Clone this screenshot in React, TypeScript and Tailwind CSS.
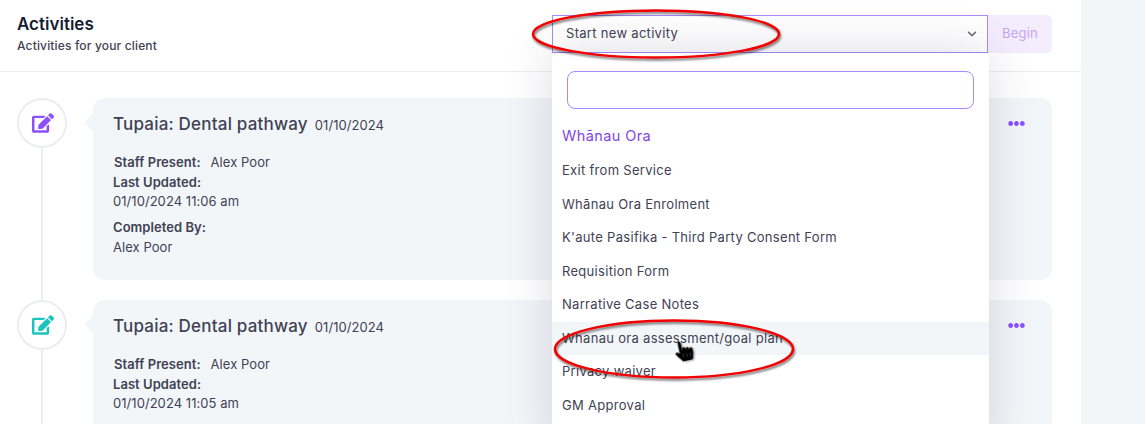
import { FaChevronDown, FaEdit, FaEllipsisH, FaHandPointer } from "react-icons/fa";

const font = "font-['Inter','Noto_Sans',sans-serif]";

const menuItems = [
  "Exit from Service",
  "Whānau Ora Enrolment",
  "K'aute Pasifika - Third Party Consent Form",
  "Requisition Form",
  "Narrative Case Notes",
  "Whanau ora assessment/goal plan",
  "Privacy waiver",
  "GM Approval",
];

interface ActivityProps {
  iconClass: string;
  updated: string;
  completed?: boolean;
}

function Activity({ iconClass, updated, completed }: ActivityProps) {
  return (
    <div className="relative flex pb-5">
      <div className="absolute top-0 bottom-0 left-[24px] w-[2px] bg-[#ebedf3]" />
      <div className="relative flex h-[50px] w-[50px] shrink-0 items-center justify-center rounded-full border-2 border-[#ebedf3] bg-white">
        <FaEdit className={`ml-[1px] text-[22px] ${iconClass}`} />
      </div>
      <div className="relative ml-[26px] h-[182px] flex-1 rounded-xl bg-[#f3f6f9] pt-[14px] pl-5 text-[13px] tracking-[0.05px] text-[#3f4254]">
        <div className="absolute top-[18px] -left-[6px] h-[13px] w-[13px] rotate-45 bg-[#f3f6f9]" />
        <div className="absolute top-[17px] right-[27px]">
          <FaEllipsisH className="text-[17px] text-[#8950fc]" />
        </div>
        <div className="flex items-baseline gap-[7px]">
          <span className="text-[17px] font-medium tracking-[0.2px]">Tupaia: Dental pathway</span>
          <span className="text-[13px]">01/10/2024</span>
        </div>
        <div className="mt-[15px] flex h-[20px] items-center pl-[1px]">
          <span className="font-semibold">Staff Present:</span>
          <span className="ml-[10px]">Alex Poor</span>
        </div>
        <div className="flex h-[20px] items-center font-semibold">Last Updated:</div>
        <div className="flex h-[19px] items-center">{updated}</div>
        {completed && (
          <>
            <div className="mt-[6px] flex h-[20px] items-center font-semibold">Completed By:</div>
            <div className="flex h-[20px] items-center">Alex Poor</div>
          </>
        )}
      </div>
    </div>
  );
}

export default function App() {
  return (
    <div className={`relative flex h-[424px] w-[1145px] overflow-hidden bg-[#f3f6f9] ${font}`}>
      <main className="relative h-full w-[1081px] bg-white">
        <header className="flex h-[72px] justify-between border-b border-[#ebedf3] pt-[15px] pr-[29px] pl-[17px]">
          <div className="-mt-[1px]">
            <h1 className="text-[17px] leading-[20px] font-semibold text-[#181c32]">Activities</h1>
            <p className="mt-[3px] text-[12px] leading-[18px] font-medium tracking-[0.16px] text-[#3f4254]">Activities for your client</p>
          </div>
          <div className="relative flex h-[38px]">
            <div className="flex w-[436px] items-center justify-between border border-[#a78bfa] pr-[10px] pl-[13px] text-[13px] tracking-[0.3px] text-[#3f4254]">
              <span>Start new activity</span>
              <FaChevronDown className="text-[10px] text-[#6b7280]" />
            </div>
            <button className="h-[38px] w-[64px] rounded-r-md bg-[#f4edfe] text-[13px] tracking-[0.2px] text-[#c4a6f8]">Begin</button>

            <div className="absolute top-[38px] left-0 z-10 h-[400px] w-[437px] rounded-t-md bg-white pt-[18px] shadow-[0_0_50px_rgba(82,63,105,0.2)]">
              <div className="mx-[15px] h-[38px] rounded-lg border border-[#a78bfa] bg-white" />
              <div className="mt-[15px] flex h-[24px] items-center px-[10px] text-[14.5px] tracking-[0.4px] text-[#8345e6]">Whānau Ora</div>
              <ul className="mt-[6px]">
                {menuItems.map((item) => (
                  <li
                    key={item}
                    className={`flex h-[33.5px] items-center px-[10px] text-[13px] tracking-[0.3px] text-[#3f4254] ${
                      item.startsWith("Whanau") ? "bg-[#f3f6f9]" : ""
                    }`}
                  >
                    {item}
                  </li>
                ))}
              </ul>
            </div>
          </div>
        </header>
        <section className="pt-[26px] pr-[29px] pl-[17px]">
          <Activity iconClass="text-[#8950fc]" updated="01/10/2024 11:06 am" completed />
          <Activity iconClass="text-[#1bc5bd]" updated="01/10/2024 11:05 am" />
        </section>
      </main>

      {/* red markup drawn over the screenshot, plus the mouse pointer */}
      <svg className="pointer-events-none absolute inset-0 z-20" width="1145" height="424" viewBox="0 0 1145 424" fill="none">
        <defs>
          <filter id="markShadow" x="-10%" y="-30%" width="120%" height="170%">
            <feDropShadow dx="1" dy="2" stdDeviation="1.2" floodColor="#000" floodOpacity="0.55" />
          </filter>
        </defs>
        <ellipse cx="656" cy="34" rx="123" ry="23.5" stroke="#f00000" strokeWidth="2.5" filter="url(#markShadow)" />
        <ellipse cx="674" cy="349" rx="119" ry="28.5" stroke="#f00000" strokeWidth="2.5" filter="url(#markShadow)" />
      </svg>
      <FaHandPointer className="pointer-events-none absolute top-[341px] left-[674px] z-30 -rotate-12 text-[20px] text-black drop-shadow-[1px_1px_1px_rgba(0,0,0,0.4)]" />
    </div>
  );
}
